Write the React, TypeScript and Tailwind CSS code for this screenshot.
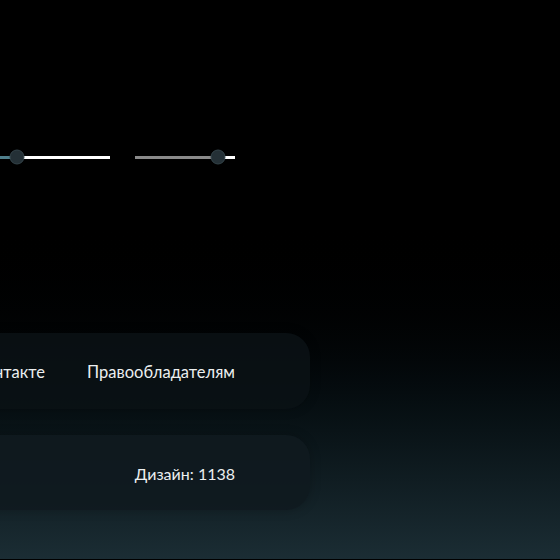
function Slider({ width, value, left, right }: { width: number; value: number; left: string; right: string }) {
  return (
    <div className="relative flex h-4 items-center" style={{ width }}>
      <div className={`h-[3px] ${left}`} style={{ width: value }} />
      <div className={`h-[3px] flex-1 ${right}`} />
      <div
        className="absolute top-1/2 h-[15px] w-[15px] -translate-x-1/2 -translate-y-1/2 rounded-full border border-[#34444a] bg-[#243036]"
        style={{ left: value }}
      />
    </div>
  );
}

export default function App() {
  return (
    <div
      className="h-[560px] w-[560px] overflow-hidden border-b border-black bg-gradient-to-b from-black from-[38%] to-[#1b2d34] text-[#eceff0]"
      style={{ fontFamily: "Lato, 'Noto Sans', sans-serif" }}
    >
      <div className="-ml-[100px] flex w-[410px] flex-col pt-[149px]">
        <div className="flex items-center gap-[25px]">
          <Slider width={210} value={117} left="bg-[#4f7f8c]" right="bg-white" />
          <Slider width={100} value={83} left="bg-[#8a8a8a]" right="bg-white" />
        </div>

        <div className="mt-[168px] flex h-[76px] items-center justify-end gap-[42px] rounded-[24px] bg-[#0a1215]/85 pr-[75px] pt-[3px] text-[16.5px] shadow-[0_0_12px_rgba(0,0,0,0.2)]">
          <span>ВКонтакте</span>
          <span>Правообладателям</span>
        </div>

        <div className="mt-[26px] flex h-[75px] items-center justify-end rounded-[24px] bg-[#0f1a1f]/90 pr-[75px] pt-[2px] text-[16px] shadow-[0_0_12px_rgba(0,0,0,0.2)]">
          <span>Дизайн: 1138</span>
        </div>
      </div>
    </div>
  );
}
